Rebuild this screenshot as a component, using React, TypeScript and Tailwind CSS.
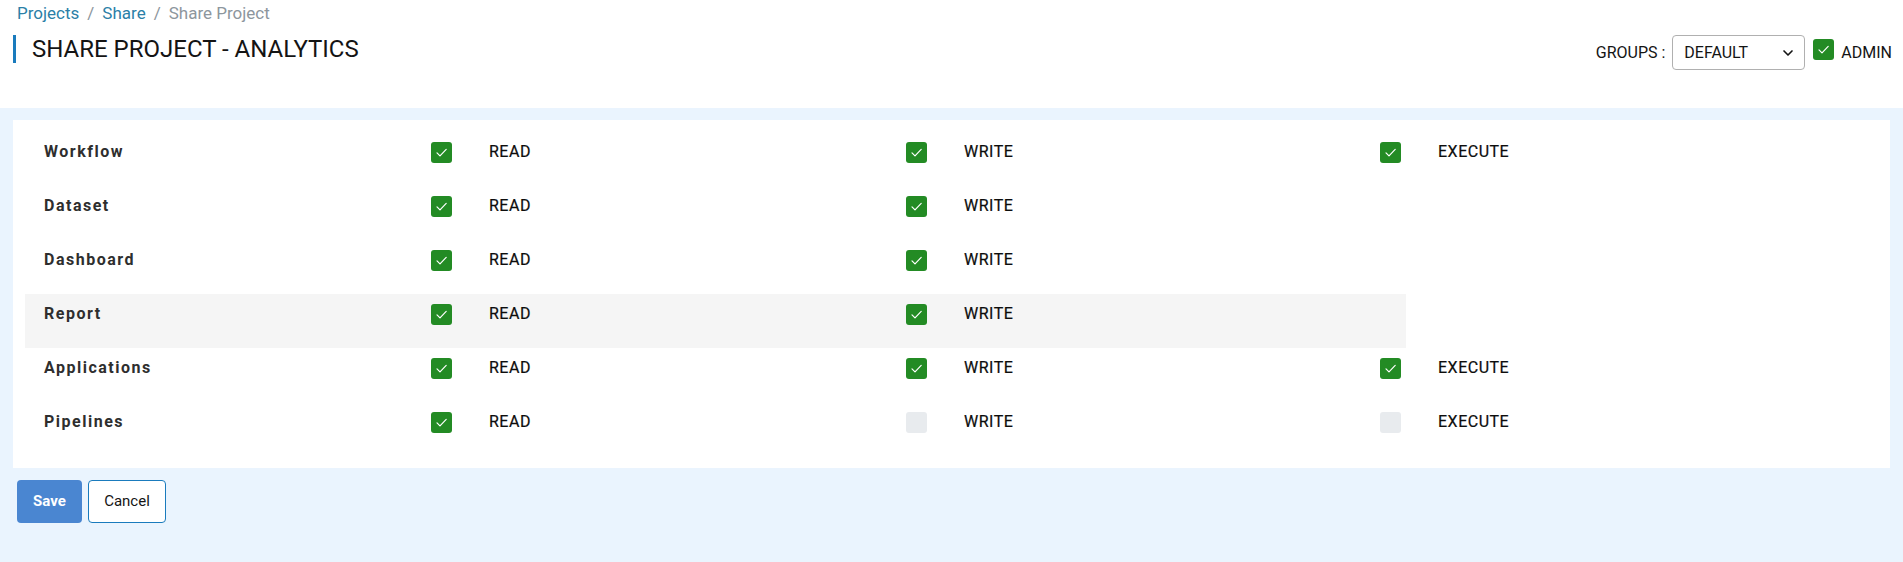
import { ChevronDown } from 'lucide-react';

type Perm = boolean | null;

interface Row {
  name: string; perms: [Perm, Perm, Perm]; active?: boolean;
}

const LABELS = ['READ', 'WRITE', 'EXECUTE'];

const rows: Row[] = [
  { name: 'Workflow', perms: [true, true, true] },
  { name: 'Dataset', perms: [true, true, null] },
  { name: 'Dashboard', perms: [true, true, null] },
  { name: 'Report', perms: [true, true, null], active: true },
  { name: 'Applications', perms: [true, true, true] },
  { name: 'Pipelines', perms: [true, false, false] },
];

function Box({ checked }: { checked: boolean }) {
  return (
    <span className={`inline-flex items-center justify-center w-[21px] h-[21px] rounded-[3px] shrink-0 ${checked ? 'bg-[#238b24]' : 'bg-[#e8ebee]'}`}>
      {checked && (
        <svg viewBox="0 0 21 21" className="w-[21px] h-[21px]">
          <path d="M6 10.8 L9 13.8 L15.2 7.4" fill="none" stroke="#fff" strokeWidth="1.2" strokeLinecap="round" strokeLinejoin="round" />
        </svg>
      )}
    </span>
  );
}

export default function App() {
  return (
    <div className="min-h-[562px] bg-[#eaf4fe] font-['Roboto',sans-serif]">
      <header className="h-[108px] bg-white">
        <nav className="pl-[17px] pt-[2px] h-[26px] text-[17px] leading-[22px]">
          <span className="text-[#2b7fa7]">Projects</span>
          <span className="text-[#8d969d] mx-[8px]">/</span>
          <span className="text-[#2b7fa7]">Share</span>
          <span className="text-[#8d969d] mx-[8px]">/</span>
          <span className="text-[#8d969d]">Share Project</span>
        </nav>
        <div className="flex justify-between items-start mt-[9px] pr-[11px]">
          <h1 className="ml-[13px] border-l-[3px] border-[#1a7bbd] h-[28px] pl-[16px] text-[24px] leading-[28px] text-[#141414] font-normal">
            SHARE PROJECT - ANALYTICS
          </h1>
          <div className="flex items-center h-[35px] text-[16px] text-[#141414]">
            <span className="mr-[7px]">GROUPS :</span>
            <div className="flex items-center justify-between w-[133px] h-[35px] border border-[#b0b0b0] rounded-[4px] pl-[11px] pr-[8px]">
              <span>DEFAULT</span>
              <ChevronDown className="w-[16px] h-[16px]" strokeWidth={2.5} />
            </div>
            <span className="ml-[8px] mr-[7px]"><Box checked /></span>
            <span>ADMIN</span>
          </div>
        </div>
      </header>

      <main className="px-[13px] pt-[12px]">
        <div className="bg-white p-[12px]">
          {rows.map((r) => (
            <div key={r.name} className={`flex items-start h-[54px] pt-[10px] ${r.active ? 'bg-[#f5f5f5] w-[1381px]' : ''}`}>
              <div className="w-[406px] pl-[19px] h-[21px] leading-[19px] text-[16px] font-bold tracking-[1.5px] text-[#2e2e2e]">{r.name}</div>
              {r.perms.map((p, i) =>
                p === null ? null : (
                  <div key={i} className={`flex items-start ${i === 0 ? 'w-[475px]' : 'w-[474px]'}`}>
                    <Box checked={p} />
                    <span className="ml-[37px] h-[21px] leading-[19px] text-[16px] tracking-[0.5px] text-[#0d0d0d] [-webkit-text-stroke:0.2px_#0d0d0d]">{LABELS[i]}</span>
                  </div>
                )
              )}
            </div>
          ))}
        </div>
        <div className="flex gap-[6px] mt-[12px] ml-[4px]">
          <button className="w-[65px] h-[43px] rounded-[4px] bg-[#4a86d1] text-white text-[15px] font-bold">Save</button>
          <button className="w-[78px] h-[43px] rounded-[4px] bg-white border border-[#1a7bbd] text-[#141414] text-[15px]">Cancel</button>
        </div>
      </main>
    </div>
  );
}
